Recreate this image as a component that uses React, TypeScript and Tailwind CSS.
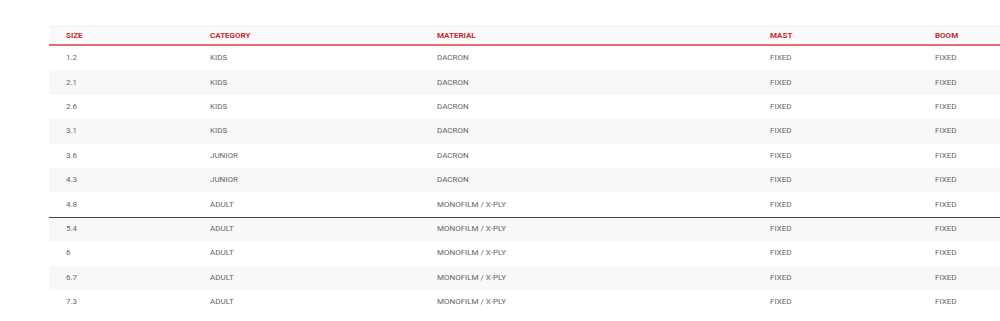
import React from "react";

const rows: [string, string, string][] = [
  ["1.2", "KIDS", "DACRON"],
  ["2.1", "KIDS", "DACRON"],
  ["2.6", "KIDS", "DACRON"],
  ["3.1", "KIDS", "DACRON"],
  ["3.6", "JUNIOR", "DACRON"],
  ["4.3", "JUNIOR", "DACRON"],
  ["4.8", "ADULT", "MONOFILM / X-PLY"],
  ["5.4", "ADULT", "MONOFILM / X-PLY"],
  ["6", "ADULT", "MONOFILM / X-PLY"],
  ["6.7", "ADULT", "MONOFILM / X-PLY"],
  ["7.3", "ADULT", "MONOFILM / X-PLY"],
];

const cols = "grid grid-cols-[144px_227px_333px_165px_1fr]";

export default function App() {
  return (
    <div className="w-[1000px] h-[321px] bg-white overflow-hidden font-['Roboto',sans-serif]">
      <div className="ml-[49px] mt-[26px] w-[951px]">
        <div className={`${cols} h-[20px] items-center bg-[#fafafa] border-t border-[#f0f0f0] border-b-2 border-b-[#e07070] text-[8px] font-bold text-[#c42a30]`}>
          <div className="pl-[17px]">SIZE</div>
          <div className="pl-[17px]">CATEGORY</div>
          <div className="pl-[17px]">MATERIAL</div>
          <div className="pl-[17px]">MAST</div>
          <div className="pl-[17px]">BOOM</div>
        </div>
        {rows.map((r, i) => (
          <div
            key={i}
            className={`${cols} h-[24.4px] items-center text-[8px] text-[#666] ${
              i % 2 === 1 ? "bg-[#f8f8f8]" : "bg-white"
            } ${i === 7 ? "border-t border-[#444]" : ""}`}
          >
            <div className="pl-[17px]">{r[0]}</div>
            <div className="pl-[17px]">{r[1]}</div>
            <div className="pl-[17px]">{r[2]}</div>
            <div className="pl-[17px]">FIXED</div>
            <div className="pl-[17px]">FIXED</div>
          </div>
        ))}
      </div>
    </div>
  );
}
